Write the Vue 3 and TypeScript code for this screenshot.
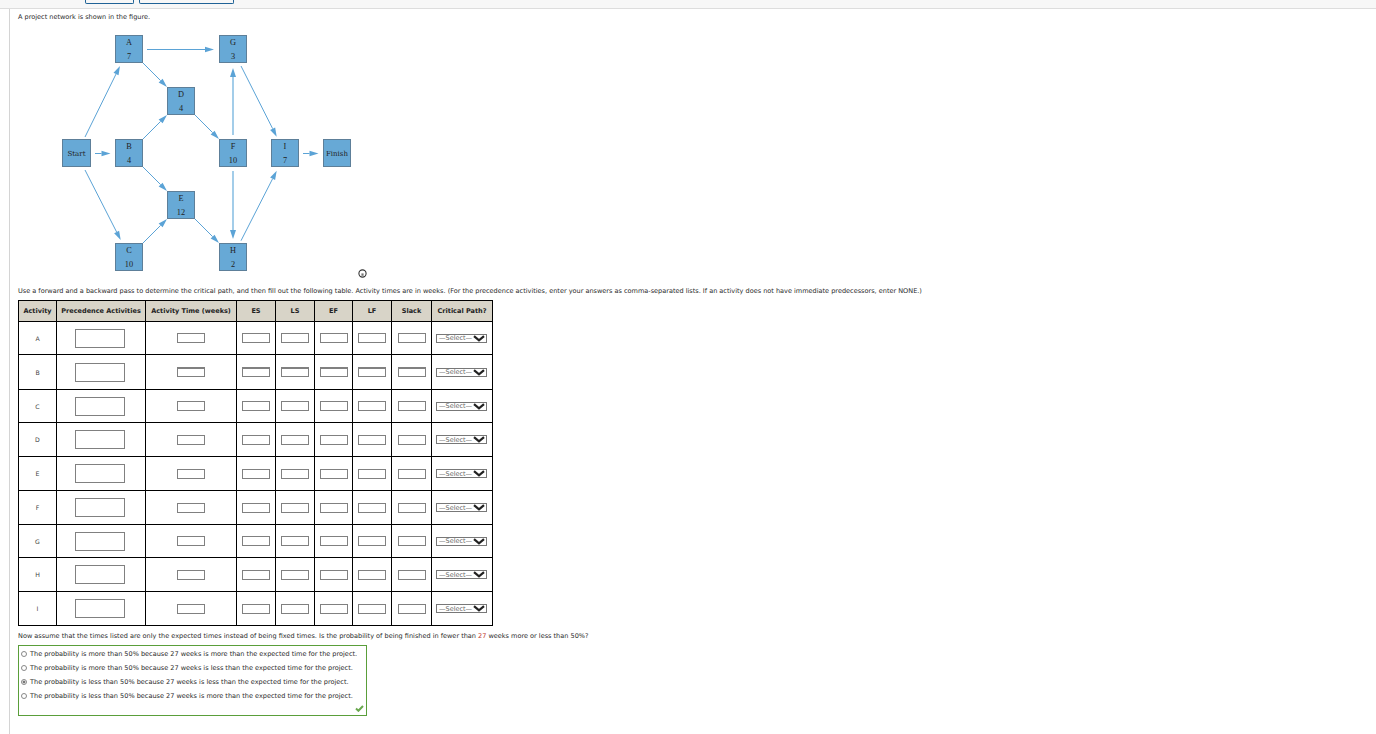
<script setup lang="ts">
interface Node { id: string; x: number; y: number; w?: number; top?: string; bottom?: string; single?: string }
const nodes: Node[] = [
  { id: 'A', x: 115, y: 35, top: 'A', bottom: '7' },
  { id: 'G', x: 219, y: 35, top: 'G', bottom: '3' },
  { id: 'D', x: 167, y: 87, top: 'D', bottom: '4' },
  { id: 'Start', x: 62, y: 139, w: 29, single: 'Start' },
  { id: 'B', x: 115, y: 139, top: 'B', bottom: '4' },
  { id: 'F', x: 219, y: 139, top: 'F', bottom: '10' },
  { id: 'I', x: 271, y: 139, top: 'I', bottom: '7' },
  { id: 'Finish', x: 323, y: 139, single: 'Finish' },
  { id: 'E', x: 167, y: 191, top: 'E', bottom: '12' },
  { id: 'C', x: 115, y: 243, top: 'C', bottom: '10' },
  { id: 'H', x: 219, y: 243, top: 'H', bottom: '2' },
]
const arrows = [
  [147, 49.5, 214, 49.5], [85, 137, 120, 66], [143, 63, 167, 87], [143, 139, 167, 115],
  [195, 115, 219, 139], [241, 66, 276.7, 136.7], [95, 153.5, 110.5, 153.5], [303, 153.5, 318.5, 153.5],
  [85, 170, 120.7, 240], [143, 167, 167, 191], [143, 243, 167, 219], [195, 219, 219, 243],
  [241, 240.7, 276.7, 170.7],
]
const lines = arrows.map(([x1, y1, x2, y2]) => {
  const a = Math.atan2(y2 - y1, x2 - x1)
  const l = 9, h = 2.8
  const bx = x2 - l * Math.cos(a), by = y2 - l * Math.sin(a)
  const px = -Math.sin(a) * h, py = Math.cos(a) * h
  return { x1, y1, x2: bx, y2: by, pts: `${x2},${y2} ${bx + px},${by + py} ${bx - px},${by - py}` }
})
const heads = ['Activity', 'Precedence Activities', 'Activity Time (weeks)', 'ES', 'LS', 'EF', 'LF', 'Slack', 'Critical Path?']
const rows = [
  { name: 'A', h: 33 }, { name: 'B', h: 35 }, { name: 'C', h: 33 }, { name: 'D', h: 34 }, { name: 'E', h: 34 },
  { name: 'F', h: 34 }, { name: 'G', h: 33 }, { name: 'H', h: 34 }, { name: 'I', h: 34 },
]
const options = [
  { t: 'The probability is more than 50% because 27 weeks is more than the expected time for the project.', on: false },
  { t: 'The probability is more than 50% because 27 weeks is less than the expected time for the project.', on: false },
  { t: 'The probability is less than 50% because 27 weeks is less than the expected time for the project.', on: true },
  { t: 'The probability is less than 50% because 27 weeks is more than the expected time for the project.', on: false },
]
</script>

<template>
  <div class="page">
    <header class="topbar">
      <span class="tab tab-a"></span>
      <span class="tab tab-b"></span>
    </header>
    <main class="content">
      <p class="intro">A project network is shown in the figure.</p>
      <div class="figure">
        <svg class="arrows" width="360" height="250" viewBox="0 0 360 250">
          <g transform="translate(-18 -27)">
            <g v-for="(l, i) in lines" :key="i">
              <line :x1="l.x1" :y1="l.y1" :x2="l.x2" :y2="l.y2" class="edge" />
              <polygon :points="l.pts" class="head" />
            </g>
            <line x1="233" y1="135" x2="233" y2="75" class="edge thick" />
            <polygon points="233,68 230,77 236,77" class="head" />
            <line x1="233" y1="171" x2="233" y2="231" class="edge thick" />
            <polygon points="233,239 230,230 236,230" class="head" />
          </g>
        </svg>
        <div
          v-for="n in nodes"
          :key="n.id"
          class="node"
          :style="{ left: n.x - 18 + 'px', top: n.y - 27 + 'px', width: (n.w ?? 28) + 'px' }"
        >
          <span v-if="n.single" class="single">{{ n.single }}</span>
          <template v-else>
            <span>{{ n.top }}</span>
            <span>{{ n.bottom }}</span>
          </template>
        </div>
        <svg class="info" width="9" height="9" viewBox="0 0 9 9">
          <circle cx="4.5" cy="4.5" r="3.6" fill="none" stroke="#333" stroke-width="1.1" />
          <rect x="3.4" y="4.4" width="2.2" height="2.4" fill="#777" />
        </svg>
      </div>
      <p class="instr">Use a forward and a backward pass to determine the critical path, and then fill out the following table. Activity times are in weeks. (For the precedence activities, enter your answers as comma-separated lists. If an activity does not have immediate predecessors, enter NONE.)</p>
      <table class="grid">
        <colgroup>
          <col class="c1" /><col class="c2" /><col class="c3" /><col class="c4" /><col class="c5" />
          <col class="c6" /><col class="c7" /><col class="c8" /><col class="c9" />
        </colgroup>
        <thead>
          <tr><th v-for="h in heads" :key="h">{{ h }}</th></tr>
        </thead>
        <tbody>
          <tr v-for="(r, i) in rows" :key="r.name" :style="{ height: r.h + 'px' }">
            <td class="name">{{ r.name }}</td>
            <td><span class="box wide"></span></td>
            <td><span class="box mid" :class="{ heavy: i === 1 }"></span></td>
            <td v-for="k in 5" :key="k"><span class="box small" :class="{ heavy: i === 1 }"></span></td>
            <td>
              <span class="select"><span class="sel-text">—Select—</span>
                <svg width="12" height="7" viewBox="0 0 12 7"><path d="M1 1.2 L6 5.4 L11 1.2" fill="none" stroke="#222" stroke-width="2.2" /></svg>
              </span>
            </td>
          </tr>
        </tbody>
      </table>
      <p class="question">Now assume that the times listed are only the expected times instead of being fixed times. Is the probability of being finished in fewer than <span class="red">27</span> weeks more or less than 50%?</p>
      <div class="answer">
        <label v-for="o in options" :key="o.t" class="opt">
          <span class="radio" :class="{ on: o.on }"></span>
          <span>{{ o.t }}</span>
        </label>
        <svg class="check" width="9" height="7" viewBox="0 0 9 7"><path d="M1 3.6 L3.4 5.8 L8 1" fill="none" stroke="#6aa84f" stroke-width="2" /></svg>
      </div>
    </main>
  </div>
</template>

<style>
html, body { margin: 0; background: #fff; }
</style>

<style scoped>
.page {
  width: 1376px;
  height: 734px;
  overflow: hidden;
  font-family: "DejaVu Sans", Verdana, sans-serif;
  font-size: 6.54px;
  color: #2b2b2b;
  background: #fff;
}
.topbar {
  height: 8px;
  background: #f7f7f7;
  border-bottom: 1px solid #ddd;
  display: flex;
  gap: 5px;
  padding-left: 85px;
  align-items: flex-start;
}
.tab {
  display: block;
  box-sizing: border-box;
  height: 4px;
  border: 1px solid #1f6296;
  border-top: 0;
  border-radius: 0 0 2px 2px;
}
.tab-a { width: 49px; }
.tab-b { width: 95px; }
.content {
  margin-left: 9px;
  border-left: 1px solid #d4d4d4;
  padding-left: 8px;
  height: 725px;
}
p { margin: 0; }
.intro { padding-top: 4px; line-height: 9px; }
.figure { position: relative; height: 259px; margin-top: 5px; }
.arrows { position: absolute; left: 0; top: 0; }
.edge { stroke: #5ba3d6; stroke-width: 1; }
.edge.thick { stroke: #a3cde9; stroke-width: 2; }
.head { fill: #5ba3d6; }
.node {
  position: absolute;
  height: 28px;
  box-sizing: border-box;
  padding-top: 2px;
  background: #67a9d6;
  border: 1px solid #5d7f99;
  display: flex;
  flex-direction: column;
  align-items: center;
  justify-content: center;
  font-family: "Liberation Serif", serif;
  font-size: 8.3px;
  line-height: 14px;
  color: #222;
}
.single { font-family: "DejaVu Serif", serif; font-size: 7px; }
.info { position: absolute; left: 340px; top: 242px; }
.instr { line-height: 9px; margin-top: 1px; white-space: nowrap; }
.grid {
  border-collapse: collapse;
  table-layout: fixed;
  width: 474px;
  margin-top: 4px;
  border: 1px solid #000;
}
.c1 { width: 38px; } .c2 { width: 89px; } .c3 { width: 91px; } .c4 { width: 39px; } .c5 { width: 39px; }
.c6 { width: 38px; } .c7 { width: 39px; } .c8 { width: 40px; } .c9 { width: 61px; }
.grid th, .grid td { border: 1px solid #000; padding: 0; text-align: center; }
.grid th {
  height: 20px;
  background: #d8d4c8;
  font-weight: 700;
  font-size: 6.54px;
  color: #222;
  white-space: nowrap;
}
.name { color: #444; font-size: 6.2px; }
.box {
  display: inline-block;
  vertical-align: middle;
  box-sizing: border-box;
  border: 1px solid #808080;
  background: #fff;
}
.box.wide { width: 50px; height: 19px; margin-right: 2px; }
.box.mid { width: 28px; height: 10px; }
.box.small { width: 28px; height: 10px; }
.box.heavy { border-top-width: 2px; }
.select {
  display: inline-flex;
  align-items: center;
  justify-content: space-between;
  box-sizing: border-box;
  width: 51px;
  height: 9px;
  margin-right: 1px;
  padding: 0 1px 0 2px;
  border: 1px solid #777;
  font-size: 6.5px;
  color: #666;
  vertical-align: middle;
}
.select svg { flex: none; }
.question { margin-top: 6px; line-height: 9px; white-space: nowrap; }
.red { color: #c0392b; }
.answer {
  position: relative;
  box-sizing: border-box;
  width: 349px;
  height: 71px;
  margin-top: 4px;
  border: 1px solid #5a9e3a;
  padding: 1px 2px;
  display: flex;
  flex-direction: column;
}
.opt { display: flex; align-items: center; gap: 3px; height: 14px; white-space: nowrap; }
.radio {
  box-sizing: border-box;
  width: 6px;
  height: 6px;
  border-radius: 50%;
  border: 1px solid #888;
  background: #fff;
  flex: none;
}
.radio.on { background: radial-gradient(circle, #777 0 45%, #fff 60%); }
.check { position: absolute; right: 2px; bottom: 3px; }
</style>
